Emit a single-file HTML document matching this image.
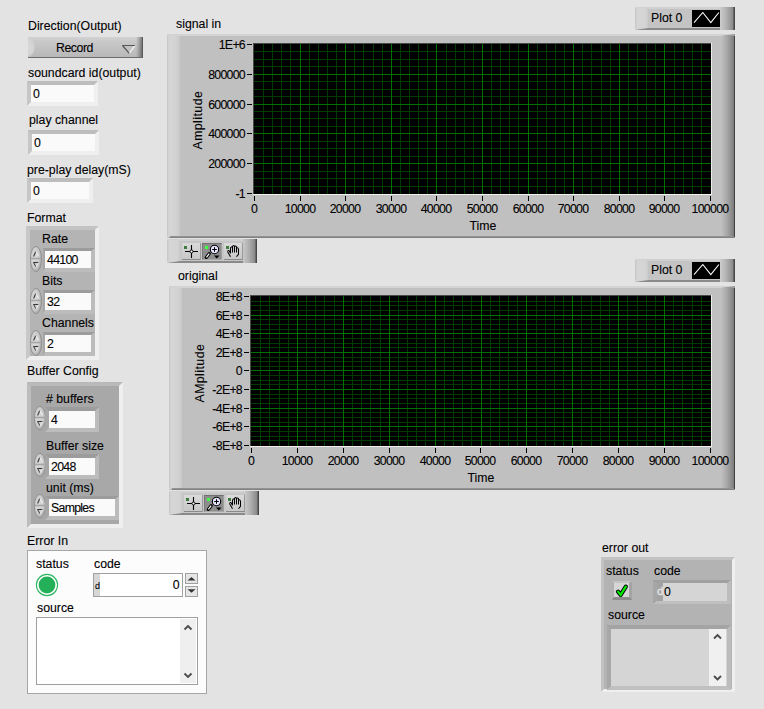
<!DOCTYPE html><html><head><meta charset="utf-8"><style>
*{margin:0;padding:0;box-sizing:border-box}
html,body{width:764px;height:709px;overflow:hidden;background:#e3e3e3}
body{position:relative;font-family:"Liberation Sans",sans-serif;color:#000;-webkit-text-stroke:0.1px #000}
.l{position:absolute;line-height:1;white-space:nowrap}
.d{position:absolute;line-height:1;white-space:nowrap;letter-spacing:-0.7px}
.a{position:absolute}
.num{position:absolute;border:4px solid;border-color:#bdbdbd #efefef #efefef #c6c6c6;background:#fafafa}
.cn{position:absolute;border-style:solid;border-width:3px 4px 4px 2px;border-color:#9c9c9c #bcbcbc #bcbcbc #a6a6a6;background:#fafafa}
.sp{position:absolute;width:12px;border-radius:50%/35%;background:linear-gradient(90deg,#bdbdbd,#dedede 40%,#c9c9c9 80%,#8c8c8c);}
.fr{position:absolute;border-style:solid;border-width:2px 14px 2px 13px;border-color:#d3d3d3 #9a9a9a #6f6f6f #d2d2d2;background:#c0c0c0}
.pb{position:absolute;width:20px;height:17px;background:linear-gradient(#dadada,#c7c7c7);border-bottom:1px solid #8a8a8a;border-right:1px solid #9a9a9a}
</style></head><body>
<div class="l" style="left:28px;top:20px;font-size:12.3px;">Direction(Output)</div>
<div class="l" style="left:28px;top:67px;font-size:12.3px;">soundcard id(output)</div>
<div class="l" style="left:29px;top:114px;font-size:12.3px;">play channel</div>
<div class="l" style="left:27px;top:164px;font-size:12.3px;">pre-play delay(mS)</div>
<div class="l" style="left:27px;top:212px;font-size:12.3px;">Format</div>
<div class="l" style="left:27px;top:365px;font-size:12.3px;">Buffer Config</div>
<div class="l" style="left:27px;top:535px;font-size:12.3px;">Error In</div>
<div class="a" style="left:28px;top:37px;width:115px;height:21px;background:linear-gradient(#d2d2d2,#c8c8c8 25%,#b8b8b8);border-bottom:1px solid #6c6c6c;border-right:1px solid #5a5a5a"></div>
<div class="a" style="left:28px;top:38px;width:7px;height:19px;background:radial-gradient(ellipse at 0 50%,#d8d8d8 0,#d4d4d4 55%,rgba(200,200,200,0) 75%)"></div>
<div class="a" style="left:136px;top:37px;width:6px;height:20px;background:linear-gradient(90deg,rgba(0,0,0,0),rgba(0,0,0,.18) 50%,rgba(0,0,0,.42))"></div>
<div class="l" style="left:56px;top:42px;font-size:12.3px;letter-spacing:-0.45px">Record</div>
<svg class="a" style="left:121px;top:44px" width="16" height="11"><path d="M8.2 9.4L14 1.5" stroke="#f2f2f2" stroke-width="1.3" fill="none"/><path d="M1.2 1.5H14M1.5 1.5L8.2 9.4" stroke="#555" stroke-width="1.2" fill="none"/></svg>
<div class="num" style="left:27px;top:81px;width:71px;height:25px;border-top-width:4px"></div>
<div class="d" style="left:33px;top:88px;font-size:12.3px;">0</div>
<div class="num" style="left:28px;top:130px;width:71px;height:25px;border-top-width:4px"></div>
<div class="d" style="left:34px;top:137px;font-size:12.3px;">0</div>
<div class="num" style="left:27px;top:178px;width:66px;height:25px;border-top-width:4px"></div>
<div class="d" style="left:33px;top:185px;font-size:12.3px;">0</div>
<div class="a" style="left:26px;top:226px;width:73px;height:134px;border:4px solid;border-color:#c4c4c4 #efefef #efefef #c8c8c8;background:#b4b4b4"></div>
<div class="l" style="left:42px;top:233px;font-size:12.3px;">Rate</div>
<div class="l" style="left:42px;top:275px;font-size:12.3px;">Bits</div>
<div class="l" style="left:42px;top:317px;font-size:12.3px;">Channels</div>
<svg class="a" style="left:30px;top:246px" width="12" height="26"><defs><radialGradient id="sg246" cx="0.4" cy="0.45" r="0.65"><stop offset="0" stop-color="#dcdcdc"/><stop offset="0.6" stop-color="#cdcdcd"/><stop offset="1" stop-color="#9a9a9a"/></radialGradient></defs><ellipse cx="6" cy="13.0" rx="5.6" ry="12.6" fill="url(#sg246)" stroke="#8a8a8a" stroke-width="0.8"/><path d="M1 12.5H11" stroke="#a6a6a6" stroke-width="1.6"/><path d="M3.6 10.5L5.8 5.5" stroke="#3a3a3a" stroke-width="1.1"/><path d="M5.8 5.5L8.4 10.0" stroke="#f4f4f4" stroke-width="1"/><path d="M3.4 16.5H8.6" stroke="#3a3a3a" stroke-width="1.1"/><path d="M3.6 16.5L6 21.0" stroke="#3a3a3a" stroke-width="1"/><path d="M6 21.0L8.4 16.6" stroke="#f0f0f0" stroke-width="1"/></svg>
<div class="cn" style="left:43px;top:248px;width:52px;height:24px"></div>
<div class="d" style="left:47px;top:254px;font-size:12.3px;">44100</div>
<svg class="a" style="left:30px;top:288px" width="12" height="26"><defs><radialGradient id="sg288" cx="0.4" cy="0.45" r="0.65"><stop offset="0" stop-color="#dcdcdc"/><stop offset="0.6" stop-color="#cdcdcd"/><stop offset="1" stop-color="#9a9a9a"/></radialGradient></defs><ellipse cx="6" cy="13.0" rx="5.6" ry="12.6" fill="url(#sg288)" stroke="#8a8a8a" stroke-width="0.8"/><path d="M1 12.5H11" stroke="#a6a6a6" stroke-width="1.6"/><path d="M3.6 10.5L5.8 5.5" stroke="#3a3a3a" stroke-width="1.1"/><path d="M5.8 5.5L8.4 10.0" stroke="#f4f4f4" stroke-width="1"/><path d="M3.4 16.5H8.6" stroke="#3a3a3a" stroke-width="1.1"/><path d="M3.6 16.5L6 21.0" stroke="#3a3a3a" stroke-width="1"/><path d="M6 21.0L8.4 16.6" stroke="#f0f0f0" stroke-width="1"/></svg>
<div class="cn" style="left:43px;top:290px;width:52px;height:24px"></div>
<div class="d" style="left:47px;top:296px;font-size:12.3px;">32</div>
<svg class="a" style="left:30px;top:330px" width="12" height="26"><defs><radialGradient id="sg330" cx="0.4" cy="0.45" r="0.65"><stop offset="0" stop-color="#dcdcdc"/><stop offset="0.6" stop-color="#cdcdcd"/><stop offset="1" stop-color="#9a9a9a"/></radialGradient></defs><ellipse cx="6" cy="13.0" rx="5.6" ry="12.6" fill="url(#sg330)" stroke="#8a8a8a" stroke-width="0.8"/><path d="M1 12.5H11" stroke="#a6a6a6" stroke-width="1.6"/><path d="M3.6 10.5L5.8 5.5" stroke="#3a3a3a" stroke-width="1.1"/><path d="M5.8 5.5L8.4 10.0" stroke="#f4f4f4" stroke-width="1"/><path d="M3.4 16.5H8.6" stroke="#3a3a3a" stroke-width="1.1"/><path d="M3.6 16.5L6 21.0" stroke="#3a3a3a" stroke-width="1"/><path d="M6 21.0L8.4 16.6" stroke="#f0f0f0" stroke-width="1"/></svg>
<div class="cn" style="left:43px;top:332px;width:52px;height:24px"></div>
<div class="d" style="left:47px;top:338px;font-size:12.3px;">2</div>
<div class="a" style="left:27px;top:382px;width:96px;height:146px;border:4px solid;border-color:#b9b9b9 #efefef #efefef #bdbdbd;background:#a8a8a8"></div>
<div class="l" style="left:46px;top:393px;font-size:12.3px;"># buffers</div>
<div class="l" style="left:46px;top:440px;font-size:12.3px;">Buffer size</div>
<div class="l" style="left:46px;top:482px;font-size:12.3px;">unit (ms)</div>
<svg class="a" style="left:34px;top:406px" width="12" height="24"><defs><radialGradient id="sg406" cx="0.4" cy="0.45" r="0.65"><stop offset="0" stop-color="#dcdcdc"/><stop offset="0.6" stop-color="#cdcdcd"/><stop offset="1" stop-color="#9a9a9a"/></radialGradient></defs><ellipse cx="6" cy="12.0" rx="5.6" ry="11.6" fill="url(#sg406)" stroke="#8a8a8a" stroke-width="0.8"/><path d="M1 11.5H11" stroke="#a6a6a6" stroke-width="1.6"/><path d="M3.6 9.5L5.8 4.5" stroke="#3a3a3a" stroke-width="1.1"/><path d="M5.8 4.5L8.4 9.0" stroke="#f4f4f4" stroke-width="1"/><path d="M3.4 15.5H8.6" stroke="#3a3a3a" stroke-width="1.1"/><path d="M3.6 15.5L6 20.0" stroke="#3a3a3a" stroke-width="1"/><path d="M6 20.0L8.4 15.6" stroke="#f0f0f0" stroke-width="1"/></svg>
<div class="cn" style="left:45px;top:407px;width:54px;height:25px;border-left-width:4px;border-top-width:4px"></div>
<div class="d" style="left:51px;top:414px;font-size:12.3px;">4</div>
<svg class="a" style="left:34px;top:453px" width="12" height="24"><defs><radialGradient id="sg453" cx="0.4" cy="0.45" r="0.65"><stop offset="0" stop-color="#dcdcdc"/><stop offset="0.6" stop-color="#cdcdcd"/><stop offset="1" stop-color="#9a9a9a"/></radialGradient></defs><ellipse cx="6" cy="12.0" rx="5.6" ry="11.6" fill="url(#sg453)" stroke="#8a8a8a" stroke-width="0.8"/><path d="M1 11.5H11" stroke="#a6a6a6" stroke-width="1.6"/><path d="M3.6 9.5L5.8 4.5" stroke="#3a3a3a" stroke-width="1.1"/><path d="M5.8 4.5L8.4 9.0" stroke="#f4f4f4" stroke-width="1"/><path d="M3.4 15.5H8.6" stroke="#3a3a3a" stroke-width="1.1"/><path d="M3.6 15.5L6 20.0" stroke="#3a3a3a" stroke-width="1"/><path d="M6 20.0L8.4 15.6" stroke="#f0f0f0" stroke-width="1"/></svg>
<div class="cn" style="left:45px;top:454px;width:54px;height:25px;border-left-width:4px;border-top-width:4px"></div>
<div class="d" style="left:51px;top:461px;font-size:12.3px;">2048</div>
<svg class="a" style="left:34px;top:494px" width="12" height="24"><defs><radialGradient id="sg494" cx="0.4" cy="0.45" r="0.65"><stop offset="0" stop-color="#dcdcdc"/><stop offset="0.6" stop-color="#cdcdcd"/><stop offset="1" stop-color="#9a9a9a"/></radialGradient></defs><ellipse cx="6" cy="12.0" rx="5.6" ry="11.6" fill="url(#sg494)" stroke="#8a8a8a" stroke-width="0.8"/><path d="M1 11.5H11" stroke="#a6a6a6" stroke-width="1.6"/><path d="M3.6 9.5L5.8 4.5" stroke="#3a3a3a" stroke-width="1.1"/><path d="M5.8 4.5L8.4 9.0" stroke="#f4f4f4" stroke-width="1"/><path d="M3.4 15.5H8.6" stroke="#3a3a3a" stroke-width="1.1"/><path d="M3.6 15.5L6 20.0" stroke="#3a3a3a" stroke-width="1"/><path d="M6 20.0L8.4 15.6" stroke="#f0f0f0" stroke-width="1"/></svg>
<div class="cn" style="left:45px;top:496px;width:74px;height:24px;border-left-width:4px;border-top-width:3px"></div>
<div class="d" style="left:51px;top:502px;font-size:12.3px;">Samples</div>
<div class="l" style="left:176px;top:18px;font-size:12.3px;">signal in</div>
<div class="fr" style="left:167px;top:34px;width:568px;height:204px"></div>
<div class="a" style="left:167px;top:36px;width:13px;height:200px;background:linear-gradient(90deg,#c4c4c4,#d6d6d6 15%,#d2d2d2 70%,#c8c8c8)"></div>
<div class="a" style="left:721px;top:36px;width:14px;height:201px;background:linear-gradient(90deg,#c2c2c2,#a2a2a2 50%,#7e7e7e 90%,#404040 93%,#404040)"></div>
<div class="a" style="left:170px;top:236px;width:564px;height:2px;background:linear-gradient(#9a9a9a,#7a7a7a)"></div>
<svg class="a" style="left:253px;top:43px" width="459" height="152" shape-rendering="crispEdges"><rect x="0" y="0" width="459" height="152" fill="#000"/><rect x="10" y="1" width="1" height="150" fill="#003c00"/><rect x="19" y="1" width="1" height="150" fill="#003c00"/><rect x="28" y="1" width="1" height="150" fill="#003c00"/><rect x="37" y="1" width="1" height="150" fill="#003c00"/><rect x="56" y="1" width="1" height="150" fill="#003c00"/><rect x="65" y="1" width="1" height="150" fill="#003c00"/><rect x="74" y="1" width="1" height="150" fill="#003c00"/><rect x="83" y="1" width="1" height="150" fill="#003c00"/><rect x="101" y="1" width="1" height="150" fill="#003c00"/><rect x="110" y="1" width="1" height="150" fill="#003c00"/><rect x="120" y="1" width="1" height="150" fill="#003c00"/><rect x="129" y="1" width="1" height="150" fill="#003c00"/><rect x="147" y="1" width="1" height="150" fill="#003c00"/><rect x="156" y="1" width="1" height="150" fill="#003c00"/><rect x="165" y="1" width="1" height="150" fill="#003c00"/><rect x="174" y="1" width="1" height="150" fill="#003c00"/><rect x="193" y="1" width="1" height="150" fill="#003c00"/><rect x="202" y="1" width="1" height="150" fill="#003c00"/><rect x="211" y="1" width="1" height="150" fill="#003c00"/><rect x="220" y="1" width="1" height="150" fill="#003c00"/><rect x="238" y="1" width="1" height="150" fill="#003c00"/><rect x="247" y="1" width="1" height="150" fill="#003c00"/><rect x="256" y="1" width="1" height="150" fill="#003c00"/><rect x="265" y="1" width="1" height="150" fill="#003c00"/><rect x="284" y="1" width="1" height="150" fill="#003c00"/><rect x="293" y="1" width="1" height="150" fill="#003c00"/><rect x="302" y="1" width="1" height="150" fill="#003c00"/><rect x="311" y="1" width="1" height="150" fill="#003c00"/><rect x="329" y="1" width="1" height="150" fill="#003c00"/><rect x="338" y="1" width="1" height="150" fill="#003c00"/><rect x="348" y="1" width="1" height="150" fill="#003c00"/><rect x="357" y="1" width="1" height="150" fill="#003c00"/><rect x="375" y="1" width="1" height="150" fill="#003c00"/><rect x="384" y="1" width="1" height="150" fill="#003c00"/><rect x="393" y="1" width="1" height="150" fill="#003c00"/><rect x="402" y="1" width="1" height="150" fill="#003c00"/><rect x="421" y="1" width="1" height="150" fill="#003c00"/><rect x="430" y="1" width="1" height="150" fill="#003c00"/><rect x="439" y="1" width="1" height="150" fill="#003c00"/><rect x="448" y="1" width="1" height="150" fill="#003c00"/><rect x="1" y="8" width="457" height="1" fill="#003c00"/><rect x="1" y="16" width="457" height="1" fill="#003c00"/><rect x="1" y="23" width="457" height="1" fill="#003c00"/><rect x="1" y="38" width="457" height="1" fill="#003c00"/><rect x="1" y="46" width="457" height="1" fill="#003c00"/><rect x="1" y="53" width="457" height="1" fill="#003c00"/><rect x="1" y="68" width="457" height="1" fill="#003c00"/><rect x="1" y="75" width="457" height="1" fill="#003c00"/><rect x="1" y="83" width="457" height="1" fill="#003c00"/><rect x="1" y="98" width="457" height="1" fill="#003c00"/><rect x="1" y="105" width="457" height="1" fill="#003c00"/><rect x="1" y="113" width="457" height="1" fill="#003c00"/><rect x="1" y="128" width="457" height="1" fill="#003c00"/><rect x="1" y="135" width="457" height="1" fill="#003c00"/><rect x="1" y="143" width="457" height="1" fill="#003c00"/><rect x="47" y="1" width="1" height="150" fill="#007000"/><rect x="92" y="1" width="1" height="150" fill="#007000"/><rect x="138" y="1" width="1" height="150" fill="#007000"/><rect x="183" y="1" width="1" height="150" fill="#007000"/><rect x="229" y="1" width="1" height="150" fill="#007000"/><rect x="275" y="1" width="1" height="150" fill="#007000"/><rect x="320" y="1" width="1" height="150" fill="#007000"/><rect x="366" y="1" width="1" height="150" fill="#007000"/><rect x="411" y="1" width="1" height="150" fill="#007000"/><rect x="1" y="31" width="457" height="1" fill="#007000"/><rect x="1" y="61" width="457" height="1" fill="#007000"/><rect x="1" y="90" width="457" height="1" fill="#007000"/><rect x="1" y="120" width="457" height="1" fill="#007000"/><rect x="0" y="0" width="458" height="1" fill="#4a4a4a"/><rect x="0" y="0" width="1" height="151" fill="#4a4a4a"/><rect x="458" y="0" width="1" height="152" fill="#efefef"/><rect x="0" y="151" width="459" height="1" fill="#efefef"/></svg>
<div class="a" style="left:247px;top:44px;width:5px;height:1px;background:#000"></div>
<div class="d" style="right:519px;top:39px;font-size:12.3px">1E+6</div>
<div class="a" style="left:247px;top:74px;width:5px;height:1px;background:#000"></div>
<div class="d" style="right:519px;top:69px;font-size:12.3px">800000</div>
<div class="a" style="left:247px;top:104px;width:5px;height:1px;background:#000"></div>
<div class="d" style="right:519px;top:99px;font-size:12.3px">600000</div>
<div class="a" style="left:247px;top:133px;width:5px;height:1px;background:#000"></div>
<div class="d" style="right:519px;top:128px;font-size:12.3px">400000</div>
<div class="a" style="left:247px;top:163px;width:5px;height:1px;background:#000"></div>
<div class="d" style="right:519px;top:158px;font-size:12.3px">200000</div>
<div class="a" style="left:247px;top:193px;width:5px;height:1px;background:#000"></div>
<div class="d" style="right:519px;top:188px;font-size:12.3px">-1</div>
<div class="a" style="left:254px;top:196px;width:1px;height:5px;background:#000"></div>
<div class="d" style="left:204px;width:100px;text-align:center;top:203px;font-size:12.3px">0</div>
<div class="a" style="left:300px;top:196px;width:1px;height:5px;background:#000"></div>
<div class="d" style="left:250px;width:100px;text-align:center;top:203px;font-size:12.3px">10000</div>
<div class="a" style="left:345px;top:196px;width:1px;height:5px;background:#000"></div>
<div class="d" style="left:295px;width:100px;text-align:center;top:203px;font-size:12.3px">20000</div>
<div class="a" style="left:391px;top:196px;width:1px;height:5px;background:#000"></div>
<div class="d" style="left:341px;width:100px;text-align:center;top:203px;font-size:12.3px">30000</div>
<div class="a" style="left:436px;top:196px;width:1px;height:5px;background:#000"></div>
<div class="d" style="left:386px;width:100px;text-align:center;top:203px;font-size:12.3px">40000</div>
<div class="a" style="left:482px;top:196px;width:1px;height:5px;background:#000"></div>
<div class="d" style="left:432px;width:100px;text-align:center;top:203px;font-size:12.3px">50000</div>
<div class="a" style="left:528px;top:196px;width:1px;height:5px;background:#000"></div>
<div class="d" style="left:478px;width:100px;text-align:center;top:203px;font-size:12.3px">60000</div>
<div class="a" style="left:573px;top:196px;width:1px;height:5px;background:#000"></div>
<div class="d" style="left:523px;width:100px;text-align:center;top:203px;font-size:12.3px">70000</div>
<div class="a" style="left:619px;top:196px;width:1px;height:5px;background:#000"></div>
<div class="d" style="left:569px;width:100px;text-align:center;top:203px;font-size:12.3px">80000</div>
<div class="a" style="left:664px;top:196px;width:1px;height:5px;background:#000"></div>
<div class="d" style="left:614px;width:100px;text-align:center;top:203px;font-size:12.3px">90000</div>
<div class="a" style="left:710px;top:196px;width:1px;height:5px;background:#000"></div>
<div class="d" style="left:660px;width:100px;text-align:center;top:203px;font-size:12.3px">100000</div>
<div class="l" style="left:433px;width:100px;text-align:center;top:220px;font-size:12.3px">Time</div>
<div class="l" style="left:158px;top:114px;width:80px;text-align:center;font-size:12.3px;letter-spacing:0.45px;transform:rotate(-90deg)">Amplitude</div>
<div class="l" style="left:178px;top:270px;font-size:12.3px;">original</div>
<div class="fr" style="left:169px;top:286px;width:566px;height:204px"></div>
<div class="a" style="left:169px;top:288px;width:13px;height:200px;background:linear-gradient(90deg,#c4c4c4,#d6d6d6 15%,#d2d2d2 70%,#c8c8c8)"></div>
<div class="a" style="left:721px;top:288px;width:14px;height:201px;background:linear-gradient(90deg,#c2c2c2,#a2a2a2 50%,#7e7e7e 90%,#404040 93%,#404040)"></div>
<div class="a" style="left:172px;top:488px;width:562px;height:2px;background:linear-gradient(#9a9a9a,#7a7a7a)"></div>
<svg class="a" style="left:250px;top:295px" width="462" height="152" shape-rendering="crispEdges"><rect x="0" y="0" width="462" height="152" fill="#000"/><rect x="10" y="1" width="1" height="150" fill="#003c00"/><rect x="19" y="1" width="1" height="150" fill="#003c00"/><rect x="29" y="1" width="1" height="150" fill="#003c00"/><rect x="38" y="1" width="1" height="150" fill="#003c00"/><rect x="56" y="1" width="1" height="150" fill="#003c00"/><rect x="65" y="1" width="1" height="150" fill="#003c00"/><rect x="74" y="1" width="1" height="150" fill="#003c00"/><rect x="84" y="1" width="1" height="150" fill="#003c00"/><rect x="102" y="1" width="1" height="150" fill="#003c00"/><rect x="111" y="1" width="1" height="150" fill="#003c00"/><rect x="120" y="1" width="1" height="150" fill="#003c00"/><rect x="130" y="1" width="1" height="150" fill="#003c00"/><rect x="148" y="1" width="1" height="150" fill="#003c00"/><rect x="157" y="1" width="1" height="150" fill="#003c00"/><rect x="166" y="1" width="1" height="150" fill="#003c00"/><rect x="175" y="1" width="1" height="150" fill="#003c00"/><rect x="194" y="1" width="1" height="150" fill="#003c00"/><rect x="203" y="1" width="1" height="150" fill="#003c00"/><rect x="212" y="1" width="1" height="150" fill="#003c00"/><rect x="221" y="1" width="1" height="150" fill="#003c00"/><rect x="240" y="1" width="1" height="150" fill="#003c00"/><rect x="249" y="1" width="1" height="150" fill="#003c00"/><rect x="258" y="1" width="1" height="150" fill="#003c00"/><rect x="267" y="1" width="1" height="150" fill="#003c00"/><rect x="286" y="1" width="1" height="150" fill="#003c00"/><rect x="295" y="1" width="1" height="150" fill="#003c00"/><rect x="304" y="1" width="1" height="150" fill="#003c00"/><rect x="313" y="1" width="1" height="150" fill="#003c00"/><rect x="331" y="1" width="1" height="150" fill="#003c00"/><rect x="341" y="1" width="1" height="150" fill="#003c00"/><rect x="350" y="1" width="1" height="150" fill="#003c00"/><rect x="359" y="1" width="1" height="150" fill="#003c00"/><rect x="377" y="1" width="1" height="150" fill="#003c00"/><rect x="387" y="1" width="1" height="150" fill="#003c00"/><rect x="396" y="1" width="1" height="150" fill="#003c00"/><rect x="405" y="1" width="1" height="150" fill="#003c00"/><rect x="423" y="1" width="1" height="150" fill="#003c00"/><rect x="432" y="1" width="1" height="150" fill="#003c00"/><rect x="442" y="1" width="1" height="150" fill="#003c00"/><rect x="451" y="1" width="1" height="150" fill="#003c00"/><rect x="1" y="6" width="460" height="1" fill="#003c00"/><rect x="1" y="10" width="460" height="1" fill="#003c00"/><rect x="1" y="15" width="460" height="1" fill="#003c00"/><rect x="1" y="24" width="460" height="1" fill="#003c00"/><rect x="1" y="29" width="460" height="1" fill="#003c00"/><rect x="1" y="34" width="460" height="1" fill="#003c00"/><rect x="1" y="43" width="460" height="1" fill="#003c00"/><rect x="1" y="48" width="460" height="1" fill="#003c00"/><rect x="1" y="52" width="460" height="1" fill="#003c00"/><rect x="1" y="62" width="460" height="1" fill="#003c00"/><rect x="1" y="66" width="460" height="1" fill="#003c00"/><rect x="1" y="71" width="460" height="1" fill="#003c00"/><rect x="1" y="80" width="460" height="1" fill="#003c00"/><rect x="1" y="85" width="460" height="1" fill="#003c00"/><rect x="1" y="89" width="460" height="1" fill="#003c00"/><rect x="1" y="99" width="460" height="1" fill="#003c00"/><rect x="1" y="103" width="460" height="1" fill="#003c00"/><rect x="1" y="108" width="460" height="1" fill="#003c00"/><rect x="1" y="117" width="460" height="1" fill="#003c00"/><rect x="1" y="122" width="460" height="1" fill="#003c00"/><rect x="1" y="127" width="460" height="1" fill="#003c00"/><rect x="1" y="136" width="460" height="1" fill="#003c00"/><rect x="1" y="141" width="460" height="1" fill="#003c00"/><rect x="1" y="145" width="460" height="1" fill="#003c00"/><rect x="47" y="1" width="1" height="150" fill="#007000"/><rect x="93" y="1" width="1" height="150" fill="#007000"/><rect x="139" y="1" width="1" height="150" fill="#007000"/><rect x="185" y="1" width="1" height="150" fill="#007000"/><rect x="231" y="1" width="1" height="150" fill="#007000"/><rect x="276" y="1" width="1" height="150" fill="#007000"/><rect x="322" y="1" width="1" height="150" fill="#007000"/><rect x="368" y="1" width="1" height="150" fill="#007000"/><rect x="414" y="1" width="1" height="150" fill="#007000"/><rect x="1" y="20" width="460" height="1" fill="#007000"/><rect x="1" y="38" width="460" height="1" fill="#007000"/><rect x="1" y="57" width="460" height="1" fill="#007000"/><rect x="1" y="75" width="460" height="1" fill="#007000"/><rect x="1" y="94" width="460" height="1" fill="#007000"/><rect x="1" y="113" width="460" height="1" fill="#007000"/><rect x="1" y="131" width="460" height="1" fill="#007000"/><rect x="0" y="0" width="461" height="1" fill="#4a4a4a"/><rect x="0" y="0" width="1" height="151" fill="#4a4a4a"/><rect x="461" y="0" width="1" height="152" fill="#efefef"/><rect x="0" y="151" width="462" height="1" fill="#efefef"/></svg>
<div class="a" style="left:244px;top:296px;width:5px;height:1px;background:#000"></div>
<div class="d" style="right:522px;top:291px;font-size:12.3px">8E+8</div>
<div class="a" style="left:244px;top:315px;width:5px;height:1px;background:#000"></div>
<div class="d" style="right:522px;top:310px;font-size:12.3px">6E+8</div>
<div class="a" style="left:244px;top:333px;width:5px;height:1px;background:#000"></div>
<div class="d" style="right:522px;top:328px;font-size:12.3px">4E+8</div>
<div class="a" style="left:244px;top:352px;width:5px;height:1px;background:#000"></div>
<div class="d" style="right:522px;top:347px;font-size:12.3px">2E+8</div>
<div class="a" style="left:244px;top:370px;width:5px;height:1px;background:#000"></div>
<div class="d" style="right:522px;top:365px;font-size:12.3px">0</div>
<div class="a" style="left:244px;top:389px;width:5px;height:1px;background:#000"></div>
<div class="d" style="right:522px;top:384px;font-size:12.3px">-2E+8</div>
<div class="a" style="left:244px;top:408px;width:5px;height:1px;background:#000"></div>
<div class="d" style="right:522px;top:403px;font-size:12.3px">-4E+8</div>
<div class="a" style="left:244px;top:426px;width:5px;height:1px;background:#000"></div>
<div class="d" style="right:522px;top:421px;font-size:12.3px">-6E+8</div>
<div class="a" style="left:244px;top:445px;width:5px;height:1px;background:#000"></div>
<div class="d" style="right:522px;top:440px;font-size:12.3px">-8E+8</div>
<div class="a" style="left:251px;top:448px;width:1px;height:5px;background:#000"></div>
<div class="d" style="left:201px;width:100px;text-align:center;top:455px;font-size:12.3px">0</div>
<div class="a" style="left:297px;top:448px;width:1px;height:5px;background:#000"></div>
<div class="d" style="left:247px;width:100px;text-align:center;top:455px;font-size:12.3px">10000</div>
<div class="a" style="left:343px;top:448px;width:1px;height:5px;background:#000"></div>
<div class="d" style="left:293px;width:100px;text-align:center;top:455px;font-size:12.3px">20000</div>
<div class="a" style="left:389px;top:448px;width:1px;height:5px;background:#000"></div>
<div class="d" style="left:339px;width:100px;text-align:center;top:455px;font-size:12.3px">30000</div>
<div class="a" style="left:435px;top:448px;width:1px;height:5px;background:#000"></div>
<div class="d" style="left:385px;width:100px;text-align:center;top:455px;font-size:12.3px">40000</div>
<div class="a" style="left:480px;top:448px;width:1px;height:5px;background:#000"></div>
<div class="d" style="left:430px;width:100px;text-align:center;top:455px;font-size:12.3px">50000</div>
<div class="a" style="left:526px;top:448px;width:1px;height:5px;background:#000"></div>
<div class="d" style="left:476px;width:100px;text-align:center;top:455px;font-size:12.3px">60000</div>
<div class="a" style="left:572px;top:448px;width:1px;height:5px;background:#000"></div>
<div class="d" style="left:522px;width:100px;text-align:center;top:455px;font-size:12.3px">70000</div>
<div class="a" style="left:618px;top:448px;width:1px;height:5px;background:#000"></div>
<div class="d" style="left:568px;width:100px;text-align:center;top:455px;font-size:12.3px">80000</div>
<div class="a" style="left:664px;top:448px;width:1px;height:5px;background:#000"></div>
<div class="d" style="left:614px;width:100px;text-align:center;top:455px;font-size:12.3px">90000</div>
<div class="a" style="left:710px;top:448px;width:1px;height:5px;background:#000"></div>
<div class="d" style="left:660px;width:100px;text-align:center;top:455px;font-size:12.3px">100000</div>
<div class="l" style="left:431px;width:100px;text-align:center;top:472px;font-size:12.3px">Time</div>
<div class="l" style="left:160px;top:367px;width:80px;text-align:center;font-size:12.3px;letter-spacing:0.45px;transform:rotate(-90deg)">AMplitude</div>
<div class="fr" style="left:635px;top:7px;width:100px;height:23px;border-width:2px 15px 2px 13px;border-color:#d0d0d0 #9a9a9a #8a8a8a #d4d4d4;background:#c4c4c4"></div>
<div class="a" style="left:635px;top:8px;width:13px;height:20px;background:linear-gradient(90deg,#c6c6c6,#d6d6d6 20%,#d4d4d4 80%,#cacaca)"></div>
<div class="a" style="left:720px;top:7px;width:15px;height:23px;background:linear-gradient(90deg,#cccccc,#b4b4b4 40%,#8c8c8c 85%,#484848 94%,#484848)"></div>
<div class="l" style="left:651px;top:12px;font-size:12.3px;">Plot 0</div>
<svg class="a" style="left:692px;top:10px" width="28" height="17"><rect width="28" height="17" fill="#000"/><path d="M2 12.7L10.8 2.5L18.8 12.7L26.9 2.5" stroke="#fff" stroke-width="1.1" fill="none"/></svg>
<div class="fr" style="left:635px;top:259px;width:100px;height:23px;border-width:2px 15px 2px 13px;border-color:#d0d0d0 #9a9a9a #8a8a8a #d4d4d4;background:#c4c4c4"></div>
<div class="a" style="left:635px;top:260px;width:13px;height:20px;background:linear-gradient(90deg,#c6c6c6,#d6d6d6 20%,#d4d4d4 80%,#cacaca)"></div>
<div class="a" style="left:720px;top:259px;width:15px;height:23px;background:linear-gradient(90deg,#cccccc,#b4b4b4 40%,#8c8c8c 85%,#484848 94%,#484848)"></div>
<div class="l" style="left:651px;top:264px;font-size:12.3px;">Plot 0</div>
<svg class="a" style="left:692px;top:262px" width="28" height="17"><rect width="28" height="17" fill="#000"/><path d="M2 12.7L10.8 2.5L18.8 12.7L26.9 2.5" stroke="#fff" stroke-width="1.1" fill="none"/></svg>
<div class="fr" style="left:167px;top:239px;width:90px;height:24px;border-width:2px 14px 2px 13px;border-color:#d0d0d0 #9a9a9a #8a8a8a #d4d4d4;background:#c6c6c6"></div>
<div class="a" style="left:167px;top:240px;width:13px;height:21px;background:linear-gradient(90deg,#c6c6c6,#d6d6d6 20%,#d4d4d4 80%,#cacaca)"></div>
<div class="a" style="left:243px;top:239px;width:14px;height:24px;background:linear-gradient(90deg,#c8c8c8,#b0b0b0 40%,#8a8a8a 85%,#484848 94%,#484848)"></div>
<div class="pb" style="left:182px;top:243px;width:19px"></div>
<div class="pb" style="left:202px;top:243px;background:#8e8e8e;border-top:1px solid #707070;border-left:1px solid #787878;border-bottom:1px solid #a8a8a8;border-right:1px solid #a0a0a0"></div>
<div class="pb" style="left:224px;top:243px;width:19px"></div>
<svg class="a" style="left:181px;top:243px" width="62" height="18"><rect x="3" y="3" width="3" height="3" fill="#3d7d3d"/><path d="M4 8.5H17M10.5 2V15" stroke="#000" stroke-width="1.1"/><circle cx="10.5" cy="8.5" r="1.5" fill="#fff" stroke="#000" stroke-width="1"/><rect x="24" y="3" width="3" height="3" fill="#40ff40"/><path d="M28.2 10.7L25.4 14.4" stroke="#000" stroke-width="3.2" stroke-linecap="round"/><path d="M28.2 10.7L25.4 14.4" stroke="#fff" stroke-width="1.2"/><circle cx="33.5" cy="6.5" r="4.2" fill="#e4e4ff" stroke="#000" stroke-width="1.1"/><path d="M31.2 6.5H35.8M33.5 4.2V8.8" stroke="#000" stroke-width="1"/><path d="M33 12.5H38.5L35.75 15.5Z" fill="#000"/><rect x="45" y="3" width="3" height="3" fill="#3d7d3d"/><path d="M46.5 8.5L49.5 13.8M46.5 8.5Q47 7.2 48 7.6L49.5 10.2M49.5 10.5V5Q50.5 3.2 51.5 4.2V9.5M51.5 4V3.6Q52.5 1.6 53.5 3.2V9.5M53.5 3.5Q54.5 2.2 55.5 3.8V9.5M55.5 4.5Q56.8 4.2 57.5 6.2V11.2L55.5 13.8" stroke="#000" stroke-width="1.05" fill="none"/></svg>
<div class="fr" style="left:169px;top:491px;width:90px;height:24px;border-width:2px 14px 2px 13px;border-color:#d0d0d0 #9a9a9a #8a8a8a #d4d4d4;background:#c6c6c6"></div>
<div class="a" style="left:169px;top:492px;width:13px;height:21px;background:linear-gradient(90deg,#c6c6c6,#d6d6d6 20%,#d4d4d4 80%,#cacaca)"></div>
<div class="a" style="left:245px;top:491px;width:14px;height:24px;background:linear-gradient(90deg,#c8c8c8,#b0b0b0 40%,#8a8a8a 85%,#484848 94%,#484848)"></div>
<div class="pb" style="left:184px;top:495px;width:19px"></div>
<div class="pb" style="left:204px;top:495px;background:#8e8e8e;border-top:1px solid #707070;border-left:1px solid #787878;border-bottom:1px solid #a8a8a8;border-right:1px solid #a0a0a0"></div>
<div class="pb" style="left:226px;top:495px;width:19px"></div>
<svg class="a" style="left:183px;top:495px" width="62" height="18"><rect x="3" y="3" width="3" height="3" fill="#3d7d3d"/><path d="M4 8.5H17M10.5 2V15" stroke="#000" stroke-width="1.1"/><circle cx="10.5" cy="8.5" r="1.5" fill="#fff" stroke="#000" stroke-width="1"/><rect x="24" y="3" width="3" height="3" fill="#40ff40"/><path d="M28.2 10.7L25.4 14.4" stroke="#000" stroke-width="3.2" stroke-linecap="round"/><path d="M28.2 10.7L25.4 14.4" stroke="#fff" stroke-width="1.2"/><circle cx="33.5" cy="6.5" r="4.2" fill="#e4e4ff" stroke="#000" stroke-width="1.1"/><path d="M31.2 6.5H35.8M33.5 4.2V8.8" stroke="#000" stroke-width="1"/><path d="M33 12.5H38.5L35.75 15.5Z" fill="#000"/><rect x="45" y="3" width="3" height="3" fill="#3d7d3d"/><path d="M46.5 8.5L49.5 13.8M46.5 8.5Q47 7.2 48 7.6L49.5 10.2M49.5 10.5V5Q50.5 3.2 51.5 4.2V9.5M51.5 4V3.6Q52.5 1.6 53.5 3.2V9.5M53.5 3.5Q54.5 2.2 55.5 3.8V9.5M55.5 4.5Q56.8 4.2 57.5 6.2V11.2L55.5 13.8" stroke="#000" stroke-width="1.05" fill="none"/></svg>
<div class="a" style="left:27px;top:550px;width:180px;height:144px;border:1px solid #a6a6a6;background:#fcfcfc"></div>
<div class="l" style="left:36px;top:558px;font-size:12.3px;">status</div>
<div class="l" style="left:94px;top:558px;font-size:12.3px;">code</div>
<div class="l" style="left:37px;top:602px;font-size:12.3px;">source</div>
<svg class="a" style="left:35px;top:573px" width="24" height="24"><circle cx="12" cy="12" r="10.6" fill="#fff" stroke="#30b563" stroke-width="1.1"/><circle cx="12" cy="12" r="8.4" fill="#23b058"/></svg>
<div class="a" style="left:93px;top:573px;width:90px;height:24px;border:1px solid #a0a0a0;background:#fff"></div>
<div class="a" style="left:94px;top:574px;width:6px;height:22px;background:#d6d6d6"></div>
<div class="a" style="left:95px;top:582px;font-size:9px;line-height:1">d</div>
<div class="d" style="right:585px;top:579px;font-size:12.3px">0</div>
<svg class="a" style="left:185px;top:573px" width="13" height="24"><rect x="0.5" y="0.5" width="12" height="10" fill="#e6e6e6" stroke="#a0a0a0"/><rect x="0.5" y="13.5" width="12" height="10" fill="#e6e6e6" stroke="#a0a0a0"/><path d="M2.5 7.5H10.5L6.5 4Z" fill="#333"/><path d="M2.5 16.2H10.5L6.5 19.8Z" fill="#333"/></svg>
<div class="a" style="left:36px;top:617px;width:162px;height:68px;border:1px solid #a0a0a0;background:#fff"></div>
<div class="a" style="left:180px;top:619px;width:16px;height:64px;background:#efefef"></div>
<svg class="a" style="left:180px;top:619px" width="16" height="64"><path d="M4.5 10.5L8 7L11.5 10.5" stroke="#4a4a4a" stroke-width="1.8" fill="none"/><path d="M4.5 54.5L8 58L11.5 54.5" stroke="#4a4a4a" stroke-width="1.8" fill="none"/></svg>
<div class="l" style="left:602px;top:542px;font-size:12.3px;">error out</div>
<div class="a" style="left:601px;top:557px;width:134px;height:135px;border:3px solid;border-color:#c2c2c2 #efefef #efefef #c2c2c2;background:#b3b3b3"></div>
<div class="l" style="left:606px;top:565px;font-size:12.3px;">status</div>
<div class="l" style="left:654px;top:565px;font-size:12.3px;">code</div>
<div class="l" style="left:608px;top:609px;font-size:12.3px;">source</div>
<div class="a" style="left:612px;top:581px;width:20px;height:19px;border-style:solid;border-width:2px 3px 3px 2px;border-color:#c4c4c4 #a4a4a4 #8c8c8c #b0b0b0;background:#d6d6d6"></div>
<svg class="a" style="left:612px;top:581px" width="20" height="19"><path d="M6 10.6L8.7 13.8L13.8 5.6" stroke="#000" stroke-width="4.2" fill="none" stroke-linejoin="round" stroke-linecap="round"/><path d="M6 10.6L8.7 13.8L13.8 5.6" stroke="#00f000" stroke-width="2.2" fill="none" stroke-linecap="round"/></svg>
<div class="a" style="left:653px;top:580px;width:78px;height:24px;border-style:solid;border-width:3px 4px 3px 4px;border-color:#a0a0a0 #bcbcbc #c0c0c0 #a6a6a6;background:#d5d5d5"></div>
<div class="a" style="left:657px;top:583px;width:6px;height:18px;background:#a2a2a2"></div>
<div class="a" style="left:657px;top:586px;font-size:11.5px;line-height:1;color:#e6e6e6;-webkit-text-stroke:0.3px #e6e6e6">d</div>
<div class="d" style="left:664px;top:586px;font-size:12.3px">0</div>
<div class="a" style="left:607px;top:625px;width:124px;height:65px;border:4px solid;border-color:#a4a4a4 #bcbcbc #c0c0c0 #a8a8a8;background:#d5d5d5"></div>
<div class="a" style="left:709px;top:629px;width:17px;height:57px;background:#f0f0f0"></div>
<svg class="a" style="left:709px;top:629px" width="17" height="57"><path d="M5 9.5L8.5 6L12 9.5" stroke="#4a4a4a" stroke-width="1.8" fill="none"/><path d="M5 47L8.5 50.5L12 47" stroke="#4a4a4a" stroke-width="1.8" fill="none"/></svg>
</body></html>
